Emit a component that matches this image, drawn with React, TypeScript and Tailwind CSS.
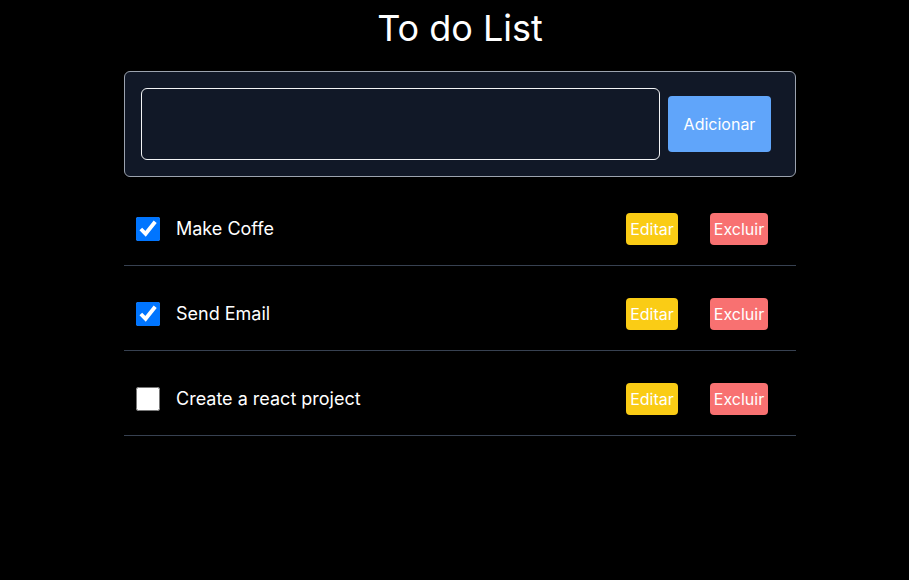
import { useState } from "react";

type Todo = { id: number; text: string; done: boolean };

const initial: Todo[] = [
  { id: 1, text: "Make Coffe", done: true },
  { id: 2, text: "Send Email", done: true },
  { id: 3, text: "Create a react project", done: false },
];

export default function App() {
  const [todos, setTodos] = useState<Todo[]>(initial);
  const [value, setValue] = useState("");

  function add() {
    if (!value.trim()) return;
    setTodos((t) => [...t, { id: Date.now(), text: value.trim(), done: false }]);
    setValue("");
  }

  return (
    <div className="min-h-[580px] bg-black pl-[11px] text-white [font-family:Inter,'Noto_Sans',sans-serif]">
      <div className="mx-auto w-[672px]">
        <h1 className="pt-2 text-center text-4xl font-normal">To do List</h1>

        <div className="mt-[23px] flex items-center gap-2 rounded-md border border-[#9ca3af] bg-[#111827] py-4 pl-4 pr-6">
          <input
            className="h-[72px] flex-1 rounded-md border border-[#f3f4f6] bg-[#111827] px-3 text-white outline-none"
            value={value}
            onChange={(e) => setValue(e.target.value)}
          />
          <button
            type="button"
            className="h-14 w-[103px] rounded-sm bg-[#60a5fa] text-base text-white"
            onClick={add}
          >
            Adicionar
          </button>
        </div>

        <ul className="mt-1">
          {todos.map((t) => (
            <li
              key={t.id}
              className="flex items-center border-b border-[#374151] pb-5 pl-3 pr-7 pt-8"
            >
              <input
                type="checkbox"
                checked={t.done}
                onChange={() =>
                  setTodos((all) => all.map((x) => (x.id === t.id ? { ...x, done: !x.done } : x)))
                }
                className="m-0 h-6 w-6 accent-[#0075ff]"
              />
              <span className="ml-4 flex-1 text-lg">{t.text}</span>
              <button type="button" className="h-8 w-[52px] rounded-sm bg-[#facc15] text-base text-white">
                Editar
              </button>
              <button
                type="button"
                className="ml-8 h-8 w-[58px] rounded-sm bg-[#f87171] text-base text-white"
                onClick={() => setTodos((all) => all.filter((x) => x.id !== t.id))}
              >
                Excluir
              </button>
            </li>
          ))}
        </ul>
      </div>
    </div>
  );
}
